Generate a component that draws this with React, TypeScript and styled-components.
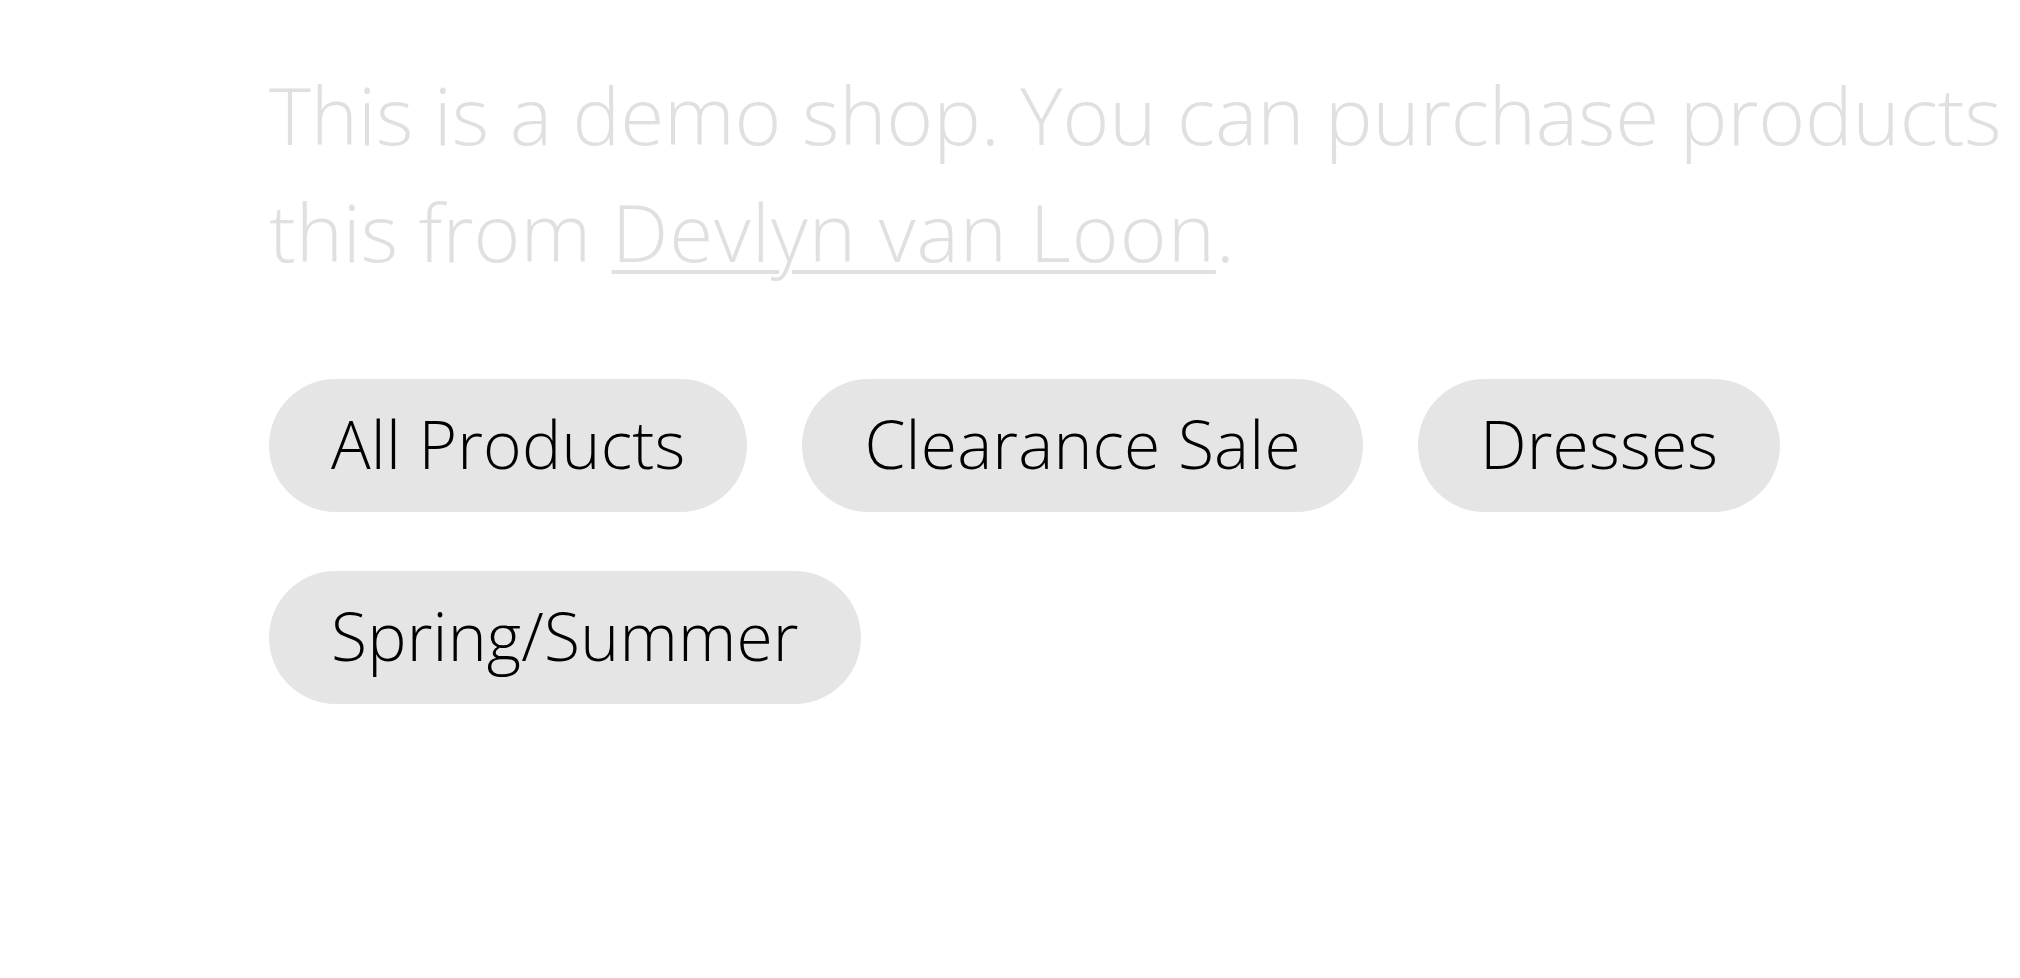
import React from "react";
import styled, { createGlobalStyle } from "styled-components";

const GlobalStyle = createGlobalStyle`
  html, body {
    margin: 0;
    padding: 0;
    background: #ffffff;
    overflow: hidden;
  }
  body {
    font-family: "Open Sans", "Noto Sans", sans-serif;
    -webkit-font-smoothing: antialiased;
  }
`;

const Page = styled.main`
  padding: 55px 0 0 269px;
  width: 100%;
  box-sizing: border-box;
`;

const Intro = styled.p`
  margin: 0;
  font-size: 80px;
  font-weight: 300;
  line-height: 117px;
  color: #e0e0e0;
  white-space: nowrap;
  letter-spacing: -0.1px;
`;

const Link = styled.a`
  color: inherit;
  text-decoration: underline;
  text-decoration-thickness: 4px;
  text-underline-offset: 8px;
  letter-spacing: 1px;
`;

const Categories = styled.nav`
  display: flex;
  flex-wrap: wrap;
  column-gap: 55px;
  row-gap: 59px;
  margin-top: 90px;
  max-width: 1560px;
`;

const Pill = styled.button`
  display: flex;
  align-items: center;
  box-sizing: border-box;
  height: 133px;
  padding: 0 62px 6px;
  border: 0;
  border-radius: 67px;
  background: #e5e5e5;
  color: #000000;
  font-family: inherit;
  font-size: 66px;
  font-weight: 300;
  letter-spacing: 0.2px;
  cursor: pointer;
`;

const categories = ["All Products", "Clearance Sale", "Dresses", "Spring/Summer"];

export default function App() {
  return (
    <>
      <GlobalStyle />
      <Page>
        <Intro>
          This is a demo shop. You can purchase products
          <br />
          this from <Link href="#">Devlyn van Loon</Link>.
        </Intro>
        <Categories>
          {categories.map((name) => (
            <Pill key={name}>{name}</Pill>
          ))}
        </Categories>
      </Page>
    </>
  );
}
